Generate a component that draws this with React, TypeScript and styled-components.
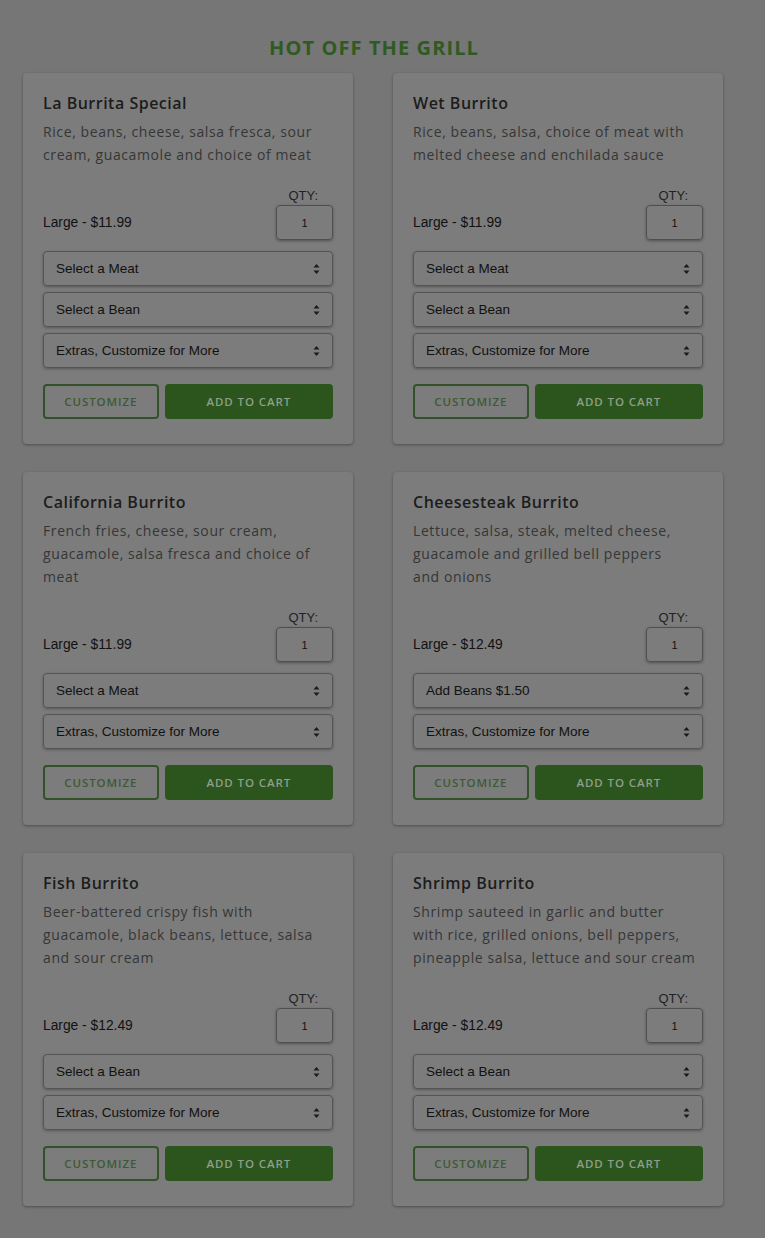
import React from 'react';
import styled, { createGlobalStyle } from 'styled-components';

const GlobalStyle = createGlobalStyle`
  html, body {
    margin: 0;
    padding: 0;
    background: #767676;
  }
  * { box-sizing: border-box; }
`;

const Page = styled.main`
  width: 748px;
  padding: 34px 23px 30px;
  font-family: 'Open Sans', 'Liberation Sans', sans-serif;
`;

const Heading = styled.h2`
  margin: 0 0 12px;
  text-align: center;
  font-size: 20px;
  font-weight: 700;
  color: #2f5a22;
  letter-spacing: 1.1px;
`;

const Grid = styled.div`
  display: grid;
  grid-template-columns: 330px 330px;
  column-gap: 40px;
  row-gap: 28px;
`;

const Card = styled.article`
  background: #7c7c7c;
  border-radius: 4px;
  box-shadow: 0 1px 3px rgba(0, 0, 0, 0.35);
  padding: 20px 20px 25px;
  display: flex;
  flex-direction: column;
`;

const Title = styled.h3`
  margin: 0;
  font-size: 16px;
  font-weight: 600;
  color: #1c1c1c;
  line-height: 20px;
  letter-spacing: 0.5px;
`;

const Description = styled.p`
  margin: 7px 0 0;
  font-size: 14px;
  line-height: 23px;
  color: #363636;
  letter-spacing: 0.6px;
  flex: 1;
`;

const Line = styled.span`
  display: block;
  white-space: nowrap;
`;

const PriceRow = styled.div`
  margin-top: 22px;
  display: flex;
  justify-content: space-between;
  align-items: flex-end;
`;

const Price = styled.span`
  font-family: 'Liberation Sans', Arial, sans-serif;
  font-size: 13.8px;
  color: #111;
  padding-bottom: 10px;
`;

const QtyBox = styled.label`
  display: flex;
  flex-direction: column;
  align-items: flex-end;
  font-family: 'Liberation Sans', Arial, sans-serif;
  font-size: 13px;
  color: #222;
`;

const QtyLabel = styled.span`
  margin-right: 15px;
  margin-bottom: 2px;
`;

const QtyInput = styled.div`
  width: 57px;
  height: 35px;
  border: 1px solid #4f4f4f;
  border-radius: 4px;
  box-shadow: 0 1px 3px rgba(0, 0, 0, 0.35);
  display: flex;
  align-items: center;
  justify-content: center;
  font-size: 11px;
  color: #111;
`;

const Selects = styled.div`
  margin-top: 11px;
  display: flex;
  flex-direction: column;
  gap: 6px;
`;

const SelectWrap = styled.div`
  position: relative;
  height: 35px;
  border: 1px solid #545454;
  border-radius: 4px;
  box-shadow: 0 1px 3px rgba(0, 0, 0, 0.3);
  display: flex;
  align-items: center;
  padding: 0 12px;
  font-family: 'Liberation Sans', Arial, sans-serif;
  font-size: 13.5px;
  color: #111;
`;

const Arrows = styled.svg`
  position: absolute;
  right: 12px;
  top: 50%;
  transform: translateY(-50%);
`;

const Actions = styled.div`
  margin-top: 16px;
  display: flex;
  gap: 6px;
`;

const Button = styled.button<{ $solid?: boolean }>`
  height: 35px;
  border-radius: 4px;
  font-family: 'Open Sans', 'Liberation Sans', sans-serif;
  font-size: 11.5px;
  font-weight: 600;
  letter-spacing: 0.9px;
  text-transform: uppercase;
  cursor: pointer;
  border: 2px solid ${p => (p.$solid ? '#2b551c' : '#33522a')};
  background: ${p => (p.$solid ? '#2b551c' : 'transparent')};
  color: ${p => (p.$solid ? '#909e8c' : '#3c5a33')};
  width: ${p => (p.$solid ? '169px' : '116px')};
`;

type Item = {
  name: string;
  desc: string[];
  price: string;
  selects: string[];
};

const items: Item[] = [
  {
    name: 'La Burrita Special',
    desc: ['Rice, beans, cheese, salsa fresca, sour', 'cream, guacamole and choice of meat'],
    price: 'Large - $11.99',
    selects: ['Select a Meat', 'Select a Bean', 'Extras, Customize for More'],
  },
  {
    name: 'Wet Burrito',
    desc: ['Rice, beans, salsa, choice of meat with', 'melted cheese and enchilada sauce'],
    price: 'Large - $11.99',
    selects: ['Select a Meat', 'Select a Bean', 'Extras, Customize for More'],
  },
  {
    name: 'California Burrito',
    desc: ['French fries, cheese, sour cream,', 'guacamole, salsa fresca and choice of', 'meat'],
    price: 'Large - $11.99',
    selects: ['Select a Meat', 'Extras, Customize for More'],
  },
  {
    name: 'Cheesesteak Burrito',
    desc: ['Lettuce, salsa, steak, melted cheese,', 'guacamole and grilled bell peppers', 'and onions'],
    price: 'Large - $12.49',
    selects: ['Add Beans $1.50', 'Extras, Customize for More'],
  },
  {
    name: 'Fish Burrito',
    desc: ['Beer-battered crispy fish with', 'guacamole, black beans, lettuce, salsa', 'and sour cream'],
    price: 'Large - $12.49',
    selects: ['Select a Bean', 'Extras, Customize for More'],
  },
  {
    name: 'Shrimp Burrito',
    desc: [
      'Shrimp sauteed in garlic and butter',
      'with rice, grilled onions, bell peppers,',
      'pineapple salsa, lettuce and sour cream',
    ],
    price: 'Large - $12.49',
    selects: ['Select a Bean', 'Extras, Customize for More'],
  },
];

const SelectArrows = () => (
  <Arrows width="7" height="11" viewBox="0 0 7 11">
    <path d="M3.5 0.5 L6.5 4 H0.5 Z" fill="#1a1a1a" />
    <path d="M3.5 10.5 L6.5 7 H0.5 Z" fill="#1a1a1a" />
  </Arrows>
);

const MenuCard = ({ item }: { item: Item }) => (
  <Card>
    <Title>{item.name}</Title>
    <Description>
      {item.desc.map(line => (
        <Line key={line}>{line}</Line>
      ))}
    </Description>
    <PriceRow>
      <Price>{item.price}</Price>
      <QtyBox>
        <QtyLabel>QTY:</QtyLabel>
        <QtyInput>1</QtyInput>
      </QtyBox>
    </PriceRow>
    <Selects>
      {item.selects.map(s => (
        <SelectWrap key={s}>
          {s}
          <SelectArrows />
        </SelectWrap>
      ))}
    </Selects>
    <Actions>
      <Button>Customize</Button>
      <Button $solid>Add to Cart</Button>
    </Actions>
  </Card>
);

export default function App() {
  return (
    <>
      <GlobalStyle />
      <Page>
        <Heading>HOT OFF THE GRILL</Heading>
        <Grid>
          {items.map(item => (
            <MenuCard key={item.name} item={item} />
          ))}
        </Grid>
      </Page>
    </>
  );
}
